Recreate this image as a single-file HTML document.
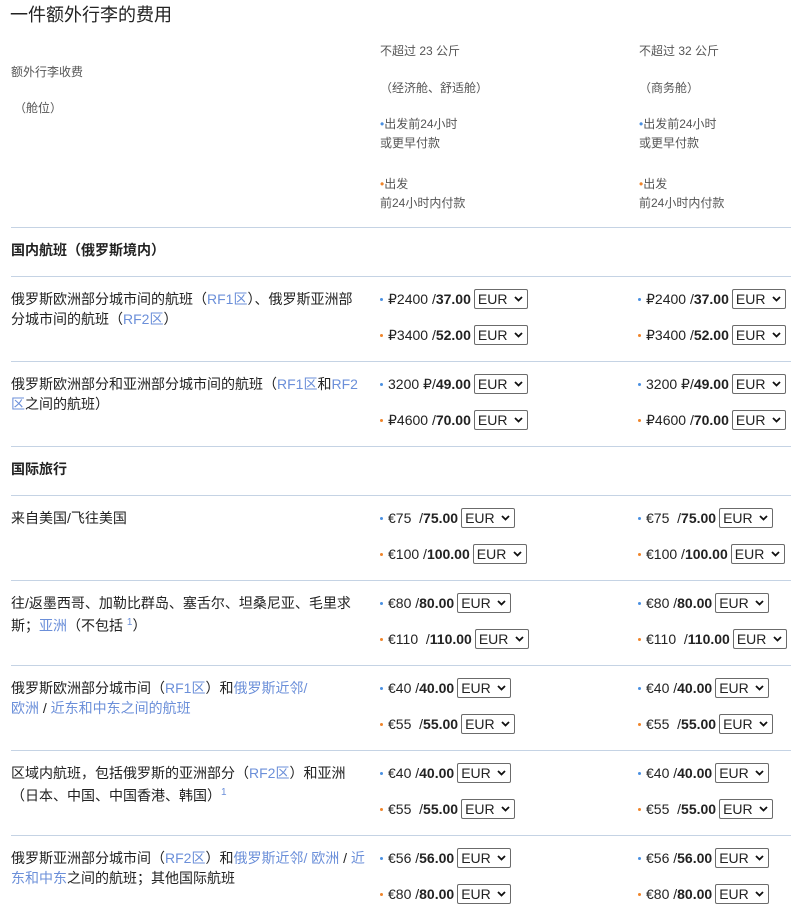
<!DOCTYPE html>
<html><head><meta charset="utf-8"><style>
body{margin:0;width:791px;height:910px;background:#fff;font-family:"Liberation Sans","Noto Sans CJK SC",sans-serif;color:#222;position:relative;overflow:hidden}
.a{position:absolute;white-space:nowrap}
.t{font-size:14px;line-height:20px}
.g{font-size:12px;color:#555;line-height:19px}
.hr{position:absolute;left:11px;width:780px;height:1px;background:#c5d3e4}
.l{color:#6b8fd9}
.p{position:absolute;font-size:14px;height:20px;display:flex;align-items:center;white-space:pre}
.p b{font-weight:bold}
.d{display:inline-block;width:3px;height:3px;border-radius:50%;margin-right:5px;background:#4a90e2}
.o .d{background:#f0852a}
.s{display:inline-flex;align-items:center;justify-content:space-between;box-sizing:border-box;width:54px;height:20px;border:1px solid #6b6b6b;border-radius:2px;margin-left:3px;padding:0 4px 0 3px;font-size:14px}
.s svg{width:9px;height:6px}
</style></head><body>
<div class="a" style="left:10px;top:3px;font-size:18px;line-height:24px;color:#222">一件额外行李的费用</div>
<div class="a g" style="left:11px;top:63px">额外行李收费</div>
<div class="a g" style="left:14px;top:99px">（舱位）</div>
<div class="a g" style="left:380px;top:42px">不超过 23 公斤</div>
<div class="a g" style="left:380px;top:79px">（经济舱、舒适舱）</div>
<div class="a g" style="left:380px;top:115px"><span style="color:#4a90e2">•</span>出发前24小时<br>或更早付款</div>
<div class="a g" style="left:380px;top:175px"><span style="color:#f0852a">•</span>出发<br>前24小时内付款</div>
<div class="a g" style="left:639px;top:42px">不超过 32 公斤</div>
<div class="a g" style="left:639px;top:79px">（商务舱）</div>
<div class="a g" style="left:639px;top:115px"><span style="color:#4a90e2">•</span>出发前24小时<br>或更早付款</div>
<div class="a g" style="left:639px;top:175px"><span style="color:#f0852a">•</span>出发<br>前24小时内付款</div>
<div class="hr" style="top:227px"></div>
<div class="a t" style="left:11px;top:240px;font-weight:bold">国内航班（俄罗斯境内）</div>
<div class="hr" style="top:276px"></div>
<div class="a t" style="left:11px;top:289px">俄罗斯欧洲部分城市间的航班（<span class="l">RF1区</span>）、俄罗斯亚洲部<br>分城市间的航班（<span class="l">RF2区</span>）</div>
<div class="hr" style="top:361px"></div>
<div class="a t" style="left:11px;top:374px">俄罗斯欧洲部分和亚洲部分城市间的航班（<span class="l">RF1区</span>和<span class="l">RF2</span><br><span class="l">区</span>之间的航班）</div>
<div class="hr" style="top:446px"></div>
<div class="a t" style="left:11px;top:459px;font-weight:bold">国际旅行</div>
<div class="hr" style="top:495px"></div>
<div class="a t" style="left:11px;top:508px">来自美国/飞往美国</div>
<div class="hr" style="top:580px"></div>
<div class="a t" style="left:11px;top:593px">往/返墨西哥、加勒比群岛、塞舌尔、坦桑尼亚、毛里求<br>斯；<span class="l">亚洲</span>（不包括 <sup class="l" style="font-size:10px">1</sup>）</div>
<div class="hr" style="top:665px"></div>
<div class="a t" style="left:11px;top:678px">俄罗斯欧洲部分城市间（<span class="l">RF1区</span>）和<span class="l">俄罗斯近邻/</span><br><span class="l">欧洲</span> / <span class="l">近东和中东之间的航班</span></div>
<div class="hr" style="top:750px"></div>
<div class="a t" style="left:11px;top:763px">区域内航班，包括俄罗斯的亚洲部分（<span class="l">RF2区</span>）和亚洲<br>（日本、中国、中国香港、韩国）<sup class="l" style="font-size:10px">1</sup></div>
<div class="hr" style="top:835px"></div>
<div class="a t" style="left:11px;top:848px">俄罗斯亚洲部分城市间（<span class="l">RF2区</span>）和<span class="l">俄罗斯近邻/ 欧洲</span> / <span class="l">近</span><br><span class="l">东和中东</span>之间的航班；其他国际航班</div>

<script>
var rows=[[289,"₽2400 /","37.00","₽3400 /","52.00"],[374,"3200 ₽/","49.00","₽4600 /","70.00"],[508,"€75  /","75.00","€100 /","100.00"],[593,"€80 /","80.00","€110  /","110.00"],[678,"€40 /","40.00","€55  /","55.00"],[763,"€40 /","40.00","€55  /","55.00"],[848,"€56 /","56.00","€80 /","80.00"]];
var sel='<span class="s">EUR<svg viewBox="0 0 9 6"><path d="M1 1L4.5 4.5L8 1" fill="none" stroke="#111" stroke-width="1.8"/></svg></span>';
var h='';
rows.forEach(function(r){[380,638].forEach(function(x){
h+='<div class="p" style="left:'+x+'px;top:'+r[0]+'px"><span class="d"></span>'+r[1]+'<b>'+r[2]+'</b>'+sel+'</div>';
h+='<div class="p o" style="left:'+x+'px;top:'+(r[0]+36)+'px"><span class="d"></span>'+r[3]+'<b>'+r[4]+'</b>'+sel+'</div>';
});});
document.body.insertAdjacentHTML('beforeend',h);
</script>
</body></html>
